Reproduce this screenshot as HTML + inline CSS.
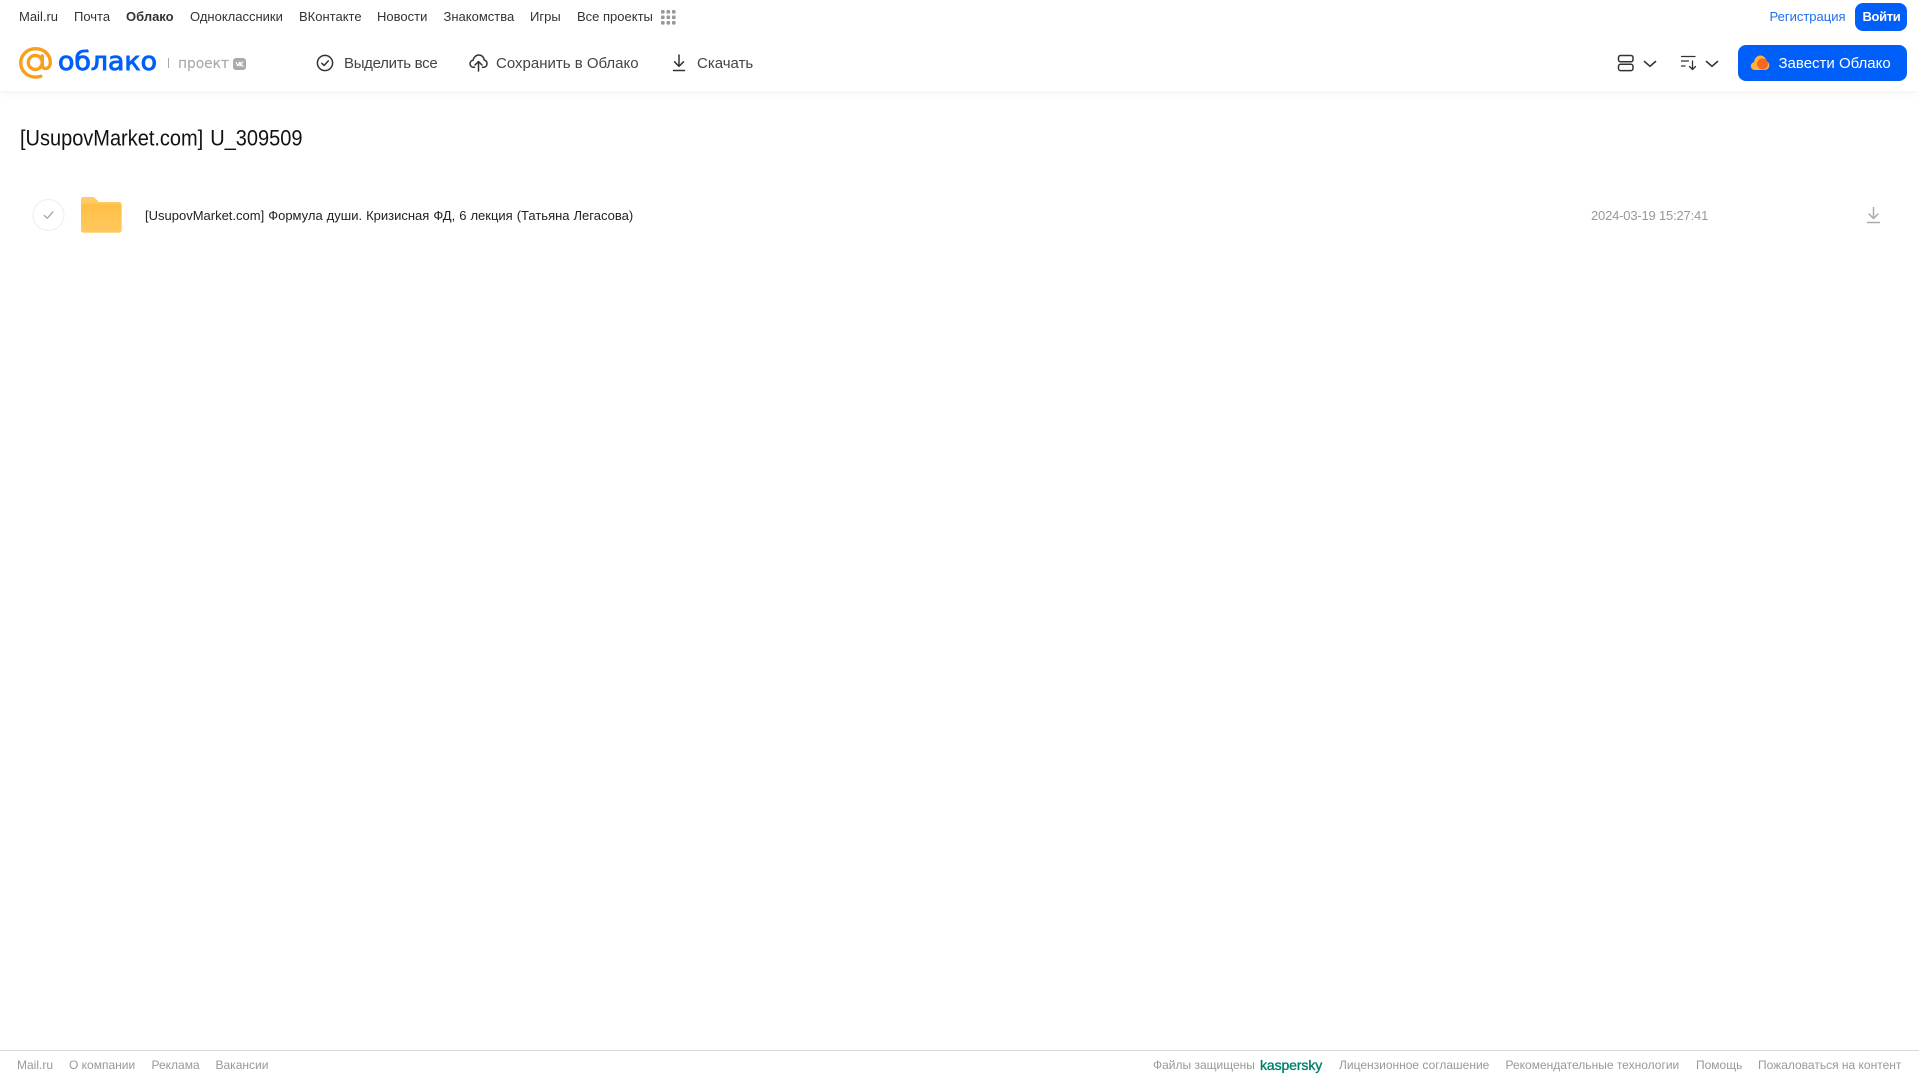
<!DOCTYPE html>
<html lang="ru"><head><meta charset="utf-8"><title>Облако</title>
<style>
html,body{margin:0;padding:0;background:#fff;width:1919px;height:1079px;overflow:hidden;font-family:"Liberation Sans",sans-serif}
.t{position:absolute;white-space:nowrap;line-height:20px;height:20px}
.n{top:7px;font-size:13px;color:#333}
.b{top:53.500px;font-size:15px;color:#444}
.f{top:1055px;font-size:12px;color:#999}
svg{position:absolute;overflow:visible}
#hdr{position:absolute;left:0;top:0;width:1919px;height:91px;background:#fff;box-shadow:0 1px 8px rgba(0,0,0,.07)}
</style></head><body>
<div id="hdr"></div>
<span class="t n" style="left:19px">Mail.ru</span>
<span class="t n" style="left:74px">Почта</span>
<span class="t n" style="left:126px;font-weight:bold">Облако</span>
<span class="t n" style="left:190px">Одноклассники</span>
<span class="t n" style="left:299px">ВКонтакте</span>
<span class="t n" style="left:377px">Новости</span>
<span class="t n" style="left:443.500px">Знакомства</span>
<span class="t n" style="left:530px">Игры</span>
<span class="t n" style="left:577px">Все проекты</span>
<svg style="left:661px;top:10px" width="15" height="15" fill="#999"><rect x="0" y="0" width="3.600" height="3.600" rx="1"/><rect x="5.500" y="0" width="3.600" height="3.600" rx="1"/><rect x="11" y="0" width="3.600" height="3.600" rx="1"/><rect x="0" y="5.500" width="3.600" height="3.600" rx="1"/><rect x="5.500" y="5.500" width="3.600" height="3.600" rx="1"/><rect x="11" y="5.500" width="3.600" height="3.600" rx="1"/><rect x="0" y="11" width="3.600" height="3.600" rx="1"/><rect x="5.500" y="11" width="3.600" height="3.600" rx="1"/><rect x="11" y="11" width="3.600" height="3.600" rx="1"/></svg>
<span class="t n" style="left:1769.500px;color:#1f6fee">Регистрация</span>
<div style="position:absolute;left:1855px;top:3px;width:52px;height:28px;background:#005ff9;border-radius:8px"></div>
<span class="t n" style="left:1862.500px;color:#fff;font-weight:bold;letter-spacing:-.35px">Войти</span>

<svg style="left:19px;top:47px" width="34" height="32" viewBox="0 0 34 32" fill="none" stroke="#f8a01a" stroke-width="3.400" stroke-linecap="round"><circle cx="16.300" cy="15.500" r="7"/><path d="M23.300 9v8.800c0 2.400 1.500 3.800 3.300 3.800 2.600 0 4.700-2.600 4.700-6.100C31.300 7.400 24.800 1.700 16.600 1.700 8.300 1.700 1.700 8.100 1.700 15.800c0 8 6.600 14.300 14.900 14.300 1.900 0 3.500-.2 5.100-.8"/></svg>
<svg style="left:56px;top:44px" width="112" height="36"><text x="2" y="26" font-family="DejaVu Sans" font-size="25.500" fill="#005ff9" stroke="#005ff9" stroke-width=".9" textLength="99" lengthAdjust="spacingAndGlyphs">облако</text></svg>
<div style="position:absolute;left:168px;top:58px;width:1px;height:10px;background:#aaa"></div>
<svg style="left:176px;top:50px" width="56" height="24"><text x="2" y="18" font-family="DejaVu Sans" font-size="14.500" fill="#aaa" stroke="#aaa" stroke-width=".15" textLength="51" lengthAdjust="spacingAndGlyphs">проект</text></svg>
<div style="position:absolute;left:233px;top:58px;width:13px;height:12px;border-radius:3px;background:#aaa"></div>
<svg style="left:233px;top:58px" width="13" height="12" fill="none" stroke="#fff" stroke-width="1.200"><path d="M3 4l1.800 4M6.800 4L4.800 8M7 3.500v5M10.300 3.800L7.300 6l3 2.500"/></svg>

<svg style="left:316px;top:54px" width="18" height="18" fill="none" stroke="#333" stroke-width="1.500" stroke-linecap="round" stroke-linejoin="round"><circle cx="9" cy="9" r="7.600"/><path d="M5.800 9.300l2.300 2.200 4.200-4.600"/></svg>
<span class="t b" style="left:344px;letter-spacing:-.3px">Выделить все</span>
<svg style="left:469px;top:53px" width="19" height="19" fill="none" stroke="#333" stroke-width="1.500" stroke-linecap="round" stroke-linejoin="round"><path d="M5.500 14.300H4.500C2.500 14.300 1 12.700 1 10.800c0-1.800 1.300-3.200 3-3.500C4.600 4.300 7 2 9.700 2c2.900 0 5.200 2.100 5.500 5 1.700.4 2.800 1.900 2.800 3.700 0 1.900-1.500 3.600-3.500 3.600h-1"/><path d="M9.500 18V9M6 12l3.500-3.500L13 12"/></svg>
<span class="t b" style="left:496px">Сохранить в Облако</span>
<svg style="left:671px;top:54px" width="16" height="18" fill="none" stroke="#333" stroke-width="1.500" stroke-linecap="round" stroke-linejoin="round"><path d="M8 1v11M3.500 7.800L8 12.300l4.500-4.500M2.500 16.500h11"/></svg>
<span class="t b" style="left:697px">Скачать</span>

<svg style="left:1617px;top:54px" width="18" height="18" fill="none" stroke="#333" stroke-width="1.500"><rect x="1.500" y="1.500" width="14.500" height="6.300" rx="2"/><rect x="1.500" y="10.300" width="14.500" height="6.300" rx="2"/></svg>
<svg style="left:1643px;top:60px" width="14" height="8" fill="none" stroke="#333" stroke-width="1.600" stroke-linecap="round" stroke-linejoin="round"><path d="M1.500 1.500L7 6.300l5.500-4.800"/></svg>
<svg style="left:1680px;top:54px" width="18" height="18" fill="none" stroke="#333" stroke-width="1.300" stroke-linecap="round" stroke-linejoin="round"><path d="M1.500 2.500h13.500M1.500 7h7M1.500 12h3.500M12.500 7v8M9.500 12.500l3 3 3-3"/></svg>
<svg style="left:1705px;top:60px" width="14" height="8" fill="none" stroke="#333" stroke-width="1.600" stroke-linecap="round" stroke-linejoin="round"><path d="M1.500 1.500L7 6.300l5.500-4.800"/></svg>

<div style="position:absolute;left:1738px;top:45px;width:169px;height:36px;background:#005ff9;border-radius:8px"></div>
<svg style="left:1750px;top:54px" width="20" height="17"><path d="M5 16C2.300 16 .8 14 .8 12c0-2 1.400-3.600 3.200-3.800C4.500 4.400 7 1.500 10.300 1.500c3.300 0 5.700 2.500 6 5.500 1.800.5 3 2.400 3 4.400 0 2.600-2 4.600-4.500 4.600z" fill="#ffb13d"/><circle cx="12.500" cy="10" r="5.500" fill="#f4681f"/></svg>
<span class="t b" style="left:1778.500px;color:#fff">Завести Облако</span>

<span class="t" style="left:20px;top:127px;font-size:20px;line-height:24px;height:24px;color:#111;letter-spacing:-.01px;word-spacing:1.500px;transform:scaleY(1.1);transform-origin:0 50%">[UsupovMarket.com] U_309509</span>

<svg style="left:32px;top:198px" width="33" height="34" fill="none"><circle cx="16.500" cy="17" r="15.500" stroke="#f0f0f0" stroke-width="1.200"/><path d="M12.300 17.500l3 2.800 5.500-6.300" stroke="#aaa" stroke-width="1.400" stroke-linecap="round" stroke-linejoin="round"/></svg>
<svg style="left:81px;top:197px" width="41" height="36"><defs><linearGradient id="g" x1="0" y1="0" x2="0" y2="1"><stop offset="0" stop-color="#ffbf45"/><stop offset="1" stop-color="#ffc95e"/></linearGradient></defs><path d="M2.500 0h9c1.500 0 2.300.7 3.200 1.700L18 5h20c1.600 0 2.600 1 2.600 2.600V33c0 1.600-1 2.600-2.600 2.600H2.600C1 35.600 0 34.600 0 33V2.500C0 1 1 0 2.500 0z" fill="#ffcb66"/><path d="M0 9c0-1.500 1-2.400 2.500-2.400h35.500c1.600 0 2.600 1 2.600 2.400v24c0 1.600-1 2.600-2.600 2.600H2.600C1 35.600 0 34.600 0 33z" fill="url(#g)"/></svg>
<span class="t" style="left:145px;top:206px;font-size:13px;color:#222;word-spacing:.4px">[UsupovMarket.com] Формула души. Кризисная ФД, 6 лекция (Татьяна Легасова)</span>
<span class="t" style="left:1591px;top:206px;font-size:13px;color:#999;letter-spacing:-.19px">2024-03-19 15:27:41</span>
<svg style="left:1866px;top:206px" width="15" height="18" fill="none" stroke="#aaa" stroke-width="1.500" stroke-linecap="round" stroke-linejoin="round"><path d="M7.500 1.500v11M3 8l4.500 4.500L12 8M1.500 16.500h12"/></svg>

<div style="position:absolute;left:0;top:1050px;width:1919px;height:1px;background:#d9d9d9"></div>
<span class="t f" style="left:17px">Mail.ru</span>
<span class="t f" style="left:69px">О компании</span>
<span class="t f" style="left:151.500px">Реклама</span>
<span class="t f" style="left:215.500px">Вакансии</span>
<span class="t f" style="left:1153px">Файлы защищены</span>
<span class="t f" style="left:1260px;color:#00806b;font-size:14px;-webkit-text-stroke:.35px #00806b;letter-spacing:-.1px">kaspersky</span>
<span class="t f" style="left:1339px">Лицензионное соглашение</span>
<span class="t f" style="left:1505.500px">Рекомендательные технологии</span>
<span class="t f" style="left:1696px">Помощь</span>
<span class="t f" style="left:1758px">Пожаловаться на контент</span>
</body></html>
